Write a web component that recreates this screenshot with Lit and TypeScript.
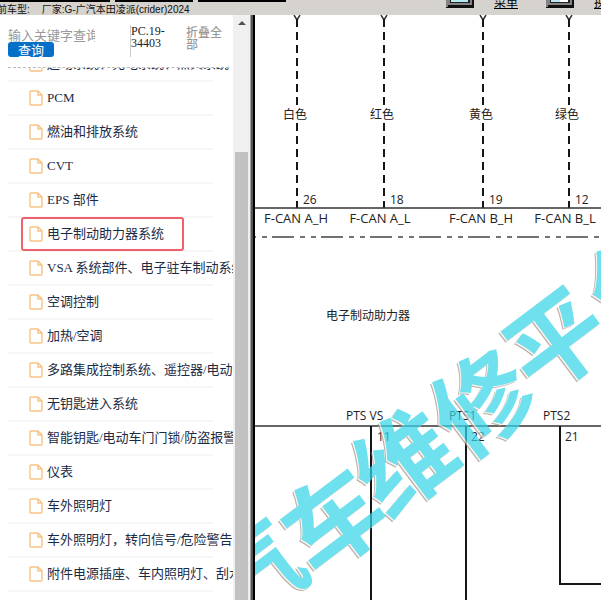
import { LitElement, html, css, svg } from "lit";
import { customElement, property } from "lit/decorators.js";

const ITEMS = [
  "PCM",
  "燃油和排放系统",
  "CVT",
  "EPS 部件",
  "电子制动助力器系统",
  "VSA 系统部件、电子驻车制动系统",
  "空调控制",
  "加热/空调",
  "多路集成控制系统、遥控器/电动",
  "无钥匙进入系统",
  "智能钥匙/电动车门门锁/防盗报警",
  "仪表",
  "车外照明灯",
  "车外照明灯，转向信号/危险警告",
  "附件电源插座、车内照明灯、刮水",
];

const fileIcon = html`<svg class="icon" viewBox="0 0 14 16" aria-hidden="true">
  <path d="M2 1H9L13 5V14Q13 15 12 15H2Q1 15 1 14V2Q1 1 2 1Z M9 1V5H13" fill="none" stroke="#f6c385" stroke-width="1.4" stroke-linejoin="round"/>
</svg>`;

@customElement("top-bar")
class TopBar extends LitElement {
  static styles = css`
    :host { display: block; height: 15px; flex: none; overflow: hidden; background: #d6d3ce; position: relative; }
    .strips { display: flex; gap: 5px; height: 2px; position: absolute; inset: 0 auto auto 0; }
    .strip { background: #000; width: 88px; }
    .strip.first { width: 110px; }
    .strip.second { width: 78px; }
    .row { display: flex; height: 15px; }
    .title { flex: 0 0 446px; font: 10px/12px "Liberation Sans", "Noto Sans CJK SC", sans-serif; color: #111; white-space: pre; padding-top: 4px; margin-left: -3px; box-sizing: border-box; }
    .title span { margin-left: 12px; }
    .tools { display: flex; gap: 20px; margin-left: 3px; }
    .tool { display: flex; width: 80px; height: 8px; gap: 20px; flex: none; padding: 0; border: 0; background: none; align-items: flex-end; color: #000; text-align: left; }
    .tool svg { width: 28px; height: 8px; flex: none; }
    .tool span { font: 12px/12px "Noto Sans CJK SC", sans-serif; text-decoration: underline; white-space: nowrap; }
  `;
  render() {
    const icon = (split: boolean) => html`<svg viewBox="0 0 28 8" aria-hidden="true">
      <path d="M0 0H28V8H0Z" fill="#111"/><path d="M0 0H26V5H2V7H0Z" fill="#848284"/>
      <path d="M4 0H24V3H4Z" fill="#222"/><path d="M5 0H22V2H5Z" fill="#b5e8f2"/>
      ${split ? svg`<path d="M14 0H22V2H14Z" fill="#fff"/>` : null}
    </svg>`;
    return html`<div class="strips"><i class="strip first"></i><i class="strip second"></i><i class="strip"></i></div>
      <div class="row">
        <div class="title">前车型:<span>厂家:G-广汽本田凌派(crider)2024</span></div>
        <div class="tools">
          <button class="tool">${icon(false)}<span>菜单</span></button>
          <button class="tool">${icon(true)}<span>换车</span></button>
        </div>
      </div>`;
  }
}

@customElement("nav-item")
class NavItem extends LitElement {
  @property() label = "";
  @property({ type: Boolean, reflect: true }) marked = false;
  static styles = css`
    :host { display: block; height: 34px; flex: none; position: relative; }
    a { display: flex; align-items: center; gap: 4px; height: 32px; padding-left: 21px; margin-right: 20px; border-bottom: 2px solid #f6f6f6;
      color: #1c2b45; text-decoration: none; white-space: nowrap; font: 13px/18px "Liberation Serif", "Noto Sans CJK SC", serif; }
    .icon { width: 14px; height: 16px; flex: none; }
    :host([marked])::after { content: ""; position: absolute; left: 13px; top: -1px; width: 163px; height: 34px; box-sizing: border-box; border: 2px solid #f0606b; border-radius: 3px; }
  `;
  render() {
    return html`<a href="#">${fileIcon}<span>${this.label}</span></a>`;
  }
}

@customElement("side-panel")
class SidePanel extends LitElement {
  static styles = css`
    :host { display: flex; min-height: 0; min-width: 0; background: #fff; }
    .main { flex: 1; min-width: 0; display: flex; flex-direction: column; padding-left: 8px; overflow: hidden; }
    .head { display: flex; height: 52px; flex: none; font: 12px/12px "Liberation Serif", "Noto Sans CJK SC", serif; }
    form { width: 122px; flex: none; padding-top: 12px; box-sizing: border-box; display: flex; flex-direction: column; align-items: flex-start; }
    input { width: 87px; height: 15px; padding: 0; border: 0; outline: 0; background: none; font: 13px/15px "Noto Sans CJK SC", sans-serif; }
    input::placeholder { color: #999; opacity: 1; }
    form button { width: 46px; height: 15px; padding: 0; border: 0; border-radius: 3px; background: #0670c8; color: #fff; font: 13px/15px "Noto Sans CJK SC", sans-serif; }
    .count { width: 38px; flex: none; height: 32px; margin-top: 10px; border-left: 1px solid #ccc; color: #222; }
    .fold { width: 40px; flex: none; margin: 10px 0 0 17px; padding: 0; border: 0; background: none; color: #888; text-align: left; height: 26px; font: 12px/12px "Noto Sans CJK SC", sans-serif; }
    .rule { flex: none; border-top: 1px dashed #bbb; margin-right: 4px; }
    .list { flex: 1; min-height: 0; overflow: hidden; display: flex; flex-direction: column; }
    .cut { flex: none; height: 14px; overflow: hidden; display: flex; flex-direction: column; justify-content: flex-end; }
    .bar { width: 17px; background: #f0f0f0; display: flex; flex-direction: column; align-items: center; flex: none; }
    .up { width: 0; height: 0; margin-top: 6px; border: 4px solid transparent; border-top: 0; border-bottom-color: #505050; }
    .thumb { width: 13px; flex: 1; margin-top: 127px; background: #c1c1c1; }
  `;
  render() {
    return html`<div class="main">
        <div class="head">
          <form><input aria-label="关键字" placeholder="输入关键字查询" /><button type="button">查询</button></form>
          <div class="count">PC.19-34403</div>
          <button class="fold">折叠全部</button>
        </div>
        <div class="rule"></div>
        <nav class="list">
          <div class="cut"><nav-item label="起动系统、充电系统、点火系统"></nav-item></div>
          ${ITEMS.map((t, i) => html`<nav-item label=${t} ?marked=${i === 4}></nav-item>`)}
        </nav>
      </div>
      <div class="bar"><i class="up"></i><i class="thumb"></i></div>`;
  }
}

@customElement("wiring-view")
class WiringView extends LitElement {
  static styles = css`
    :host { display: block; min-width: 0; background: #fff; overflow: hidden; }
    svg { display: block; width: 100%; height: 100%; font: 12px "Open Sans", "Noto Sans CJK SC", sans-serif; fill: #222; }
    .name { font-size: 13px; text-anchor: middle; }
    .wire { stroke: #161616; stroke-width: 2; fill: none; }
    .fork { stroke: #333; stroke-width: 1.5; fill: none; }
    .dash { stroke-dasharray: 8 5; }
    .thin { stroke: #333; stroke-width: 1.5; }
    .edge { stroke: #444; stroke-width: 1.5; stroke-dasharray: 22 6 5 6 5 5; }
    .mask { fill: #fff; }
    .watermark { opacity: 0.72; }
    .mark { font: 700 98px "Noto Sans CJK SC", sans-serif; fill: #36d4e8; text-anchor: middle; }
    .shade { fill: #a0948c; }
    .glow { fill: #fff3ea; }
  `;
  render() {
    const top = [
      [42, "白色", "26", "F-CAN A_H", 41],
      [129, "红色", "18", "F-CAN A_L", 125],
      [228, "黄色", "19", "F-CAN B_H", 226],
      [314, "绿色", "12", "F-CAN B_L", 310],
    ] as const;
    const chars = [["汽", -4, 558], ["车", 78, 505], ["维", 149, 446], ["修", 227, 387], ["平", 301, 325], ["台", 379, 268]] as const;
    const word = (cls: string, dx: number) => chars.map(([c, x, y]) => svg`<text class=${cls}
      transform="translate(${x + dx} ${y - dx}) rotate(-37)" y="37">${c}</text>`);
    return html`<svg>
      ${top.map(([x, color, pin, name, cx]) => svg`
        <path class="fork" d="M${x - 3} 0L${x} 5L${x + 3} 0"/>
        <path class="wire" d="M${x} 4V12"/>
        <path class="wire dash" d="M${x} 17V193"/>
        <rect class="mask" x=${x - 14} y="92" width="26" height="15"/>
        <text x=${x - 14} y="104">${color}</text>
        <text x=${x + 6} y="189">${pin}</text>
        <text class="name" x=${cx} y="208">${name}</text>`)}
      <line class="thin" x1="0" x2="100%" y1="193" y2="193"/>
      <line class="edge" x1="-32" x2="100%" y1="222" y2="222"/>
      <text x="71" y="305">电子制动助力器</text>
      <line class="thin" x1="0" x2="100%" y1="411" y2="411"/>
      <path class="wire" d="M116 411V2000M211 411V2000M305 411V569H2000"/>
      <text x="91" y="405">PTS VS</text><text x="194" y="405">PTS1</text><text x="288" y="405">PTS2</text>
      <text x="122" y="426">11</text><text x="216" y="426">22</text><text x="310" y="426">21</text>
      <g class="watermark">${word("mark shade", -2)}${word("mark glow", -1)}${word("mark", 0)}</g>
    </svg>`;
  }
}

@customElement("app-root")
class AppRoot extends LitElement {
  static styles = css`
    :host { display: flex; flex-direction: column; height: 100vh; overflow: hidden; background: #fff; }
    .body { display: flex; flex: 1; min-height: 0; }
    side-panel { flex: 0 0 250px; }
    .split { flex: 0 0 2px; background: #555; border-left: 1px solid #a0a0a0; border-right: 2px solid #000; }
    wiring-view { flex: 1; }
  `;
  render() {
    return html`<top-bar></top-bar>
      <div class="body"><side-panel></side-panel><div class="split"></div><wiring-view></wiring-view></div>`;
  }
}
